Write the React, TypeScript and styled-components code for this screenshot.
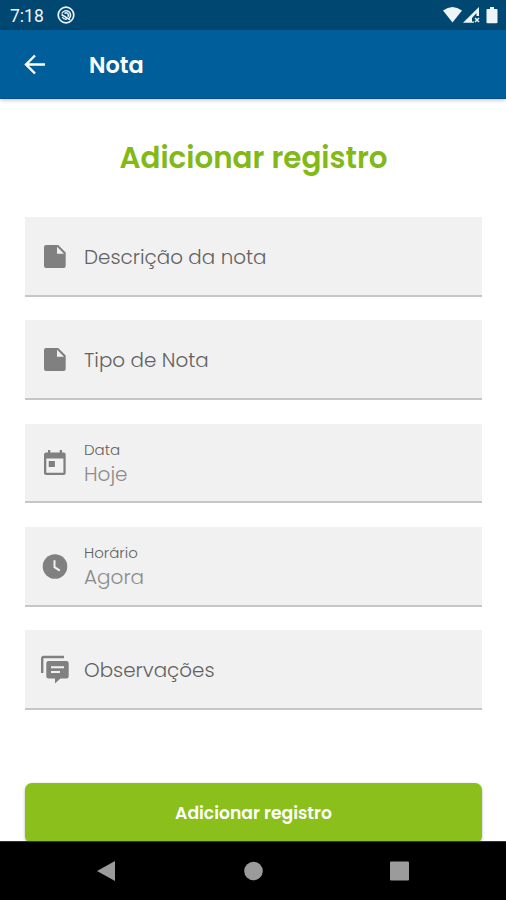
import React from 'react';
import styled, { createGlobalStyle } from 'styled-components';

const GlobalStyle = createGlobalStyle`
  * { box-sizing: border-box; }
  body { margin: 0; background: #fff; }
`;

const Screen = styled.div`
  width: 506px;
  height: 900px;
  display: flex;
  flex-direction: column;
  overflow: hidden;
  background: #fff;
  font-family: Poppins, Inter, sans-serif;
`;

const StatusBar = styled.div`
  flex: none;
  height: 30px;
  padding: 0 7px 0 10px;
  display: flex;
  align-items: center;
  background: #004772;
  color: #eef5fa;
`;

const Clock = styled.span`
  width: 47px;
  font: 400 17.5px/30px Roboto, sans-serif;
  padding-top: 2px;
`;

const StatusIcons = styled.div`
  margin-left: auto;
  display: flex;
`;

const AppBar = styled.header`
  flex: none;
  height: 69px;
  padding-left: 24px;
  display: flex;
  align-items: center;
  background: #005f9a;
  border-bottom: 1px solid #07508d;
  box-shadow: 0 1px 4px rgba(0, 0, 0, 0.25);
  color: #fff;
`;

const BarTitle = styled.h1`
  margin: 0 0 0 43px;
  padding-top: 1px;
  font-size: 22.4px;
  line-height: 30px;
  font-weight: 600;
`;

const Content = styled.main`
  flex: 1;
  min-height: 0;
  overflow: hidden;
  padding: 39px 24px 0 25px;
  display: flex;
  flex-direction: column;
`;

const Heading = styled.h2`
  flex: none;
  margin: 0 0 39px;
  text-align: center;
  font-size: 29.4px;
  line-height: 40px;
  font-weight: 600;
  color: #82b916;
`;

const Fields = styled.div`
  flex: none;
  display: flex;
  flex-direction: column;
  gap: 23.4px;
`;

const Field = styled.div`
  height: 79.9px;
  padding-left: 15px;
  display: flex;
  align-items: center;
  background: #f1f1f1;
  border-bottom: 2px solid #c6c6c6;
`;

const FieldText = styled.div`
  margin-left: 14px;
  padding-top: 2px;
  display: flex;
  flex-direction: column;
`;

const Label = styled.span<{ $small?: boolean }>`
  font-size: ${(p) => (p.$small ? 15 : 19.9)}px;
  line-height: ${(p) => (p.$small ? 20 : 28)}px;
  font-weight: 300;
  color: #626262;
`;

const Value = styled.span`
  font-size: 20px;
  line-height: 28px;
  font-weight: 300;
  color: #8c8c8c;
`;

const SubmitButton = styled.button`
  flex: none;
  height: 60px;
  margin-top: 73px;
  padding: 0;
  border: 0;
  border-radius: 7px;
  background: #8abf1c;
  box-shadow: 0 1px 3px rgba(0, 0, 0, 0.3);
  color: #fff;
  font-family: inherit;
  font-size: 17.2px;
  font-weight: 600;
`;

const NavBar = styled.nav`
  flex: none;
  height: 59px;
  padding: 0 96px;
  display: flex;
  align-items: center;
  justify-content: space-between;
  background: #000;
  border-top: 1px solid #333;
`;

const Glyph = styled.svg`
  display: block;
  flex: none;
  fill: currentColor;
`;

const FieldGlyph = styled(Glyph)`
  color: #808080;
`;

const NavGlyph = styled(Glyph)`
  color: #9b9b9b;
`;

const NoteIcon = () => (
  <FieldGlyph width="30" height="30" viewBox="0 0 30 30">
    <path fillRule="evenodd" d="M6 4h12.200l7.500 7.500v13.500a2 2 0 0 1-2 2H6a2 2 0 0 1-2-2V6a2 2 0 0 1 2-2ZM17 5.800v7h7Z" />
  </FieldGlyph>
);

const CalendarIcon = () => (
  <FieldGlyph width="30" height="30" viewBox="0 0 30 30">
    <path fillRule="evenodd" d="M8 2h2.300v2.500h9.400V2H22v2.500h1.700a2 2 0 0 1 2 2V25a2 2 0 0 1-2 2H6a2 2 0 0 1-2-2V6.500a2 2 0 0 1 2-2h2ZM6.300 10.500v14.200h17.100V10.500Z" />
    <path d="M8.700 13h6.200v6H8.700z" />
  </FieldGlyph>
);

const ClockIcon = () => (
  <FieldGlyph width="30" height="30" viewBox="0 0 30 30">
    <circle cx="15" cy="15.500" r="12.300" />
    <path d="M14.500 9.300v6.800l5.300 3.500" fill="none" stroke="#f1f1f1" strokeWidth="2" />
  </FieldGlyph>
);

const ChatIcon = () => (
  <FieldGlyph width="30" height="30" viewBox="0 0 30 30">
    <path d="M2.200 19V4.500A1.500 1.500 0 0 1 3.700 3H24" fill="none" stroke="currentColor" strokeWidth="2.400" />
    <path d="M8.500 7h18a2.200 2.200 0 0 1 2.200 2.200v13a2.200 2.200 0 0 1-2.200 2.200h-6L15 29.500v-5.100H8.500a2.200 2.200 0 0 1-2.200-2.200v-13A2.200 2.200 0 0 1 8.500 7Z" />
    <path d="M11 13.200h13M11 18h9" fill="none" stroke="#f1f1f1" strokeWidth="2" />
  </FieldGlyph>
);

interface FieldData {
  label: string;
  value?: string;
  icon: React.ReactNode;
}

const fields: FieldData[] = [
  { label: 'Descrição da nota', icon: <NoteIcon /> },
  { label: 'Tipo de Nota', icon: <NoteIcon /> },
  { label: 'Data', value: 'Hoje', icon: <CalendarIcon /> },
  { label: 'Horário', value: 'Agora', icon: <ClockIcon /> },
  { label: 'Observações', icon: <ChatIcon /> },
];

export default function App() {
  return (
    <Screen>
      <GlobalStyle />
      <StatusBar>
        <Clock>7:18</Clock>
        <Glyph width="18" height="18" viewBox="0 0 18 18">
          <circle cx="9" cy="9" r="7.800" fill="none" stroke="currentColor" strokeWidth="1.700" />
          <path d="M4.900 7.500a4.500 4.500 0 1 1 7.300 4.900M4.500 8.500l8.500 5.300M5.200 11a4.300 4.300 0 0 0 4.500 2.200M7.500 7.500a2.300 2.300 0 0 1 3.300 3.200" fill="none" stroke="currentColor" strokeWidth="1.500" />
        </Glyph>
        <StatusIcons>
          <Glyph width="56" height="20" viewBox="0 0 56 20">
            <path d="M0 5.500Q9.500-1.500 19 5.500L9.500 17.500Z" />
            <path fillRule="evenodd" d="M20 17.800 36 2v9h-2.500V8l-4.500 5v3.500h2v1.300Z" />
            <path d="m32 13 4 4m0-4-4 4" stroke="currentColor" strokeWidth="1.500" />
            <path d="M47 2h4v2h2.500a1 1 0 0 1 1 1v12.200a1 1 0 0 1-1 1h-9a1 1 0 0 1-1-1V5a1 1 0 0 1 1-1H47Z" />
          </Glyph>
        </StatusIcons>
      </StatusBar>
      <AppBar>
        <Glyph width="22" height="22" viewBox="0 0 22 22">
          <path d="M21 11.500H2.500M11 2.500l-9 9 9 9" fill="none" stroke="currentColor" strokeWidth="2.400" />
        </Glyph>
        <BarTitle>Nota</BarTitle>
      </AppBar>
      <Content>
        <Heading>Adicionar registro</Heading>
        <Fields>
          {fields.map((f) => (
            <Field key={f.label}>
              {f.icon}
              <FieldText>
                <Label $small={!!f.value}>{f.label}</Label>
                {f.value && <Value>{f.value}</Value>}
              </FieldText>
            </Field>
          ))}
        </Fields>
        <SubmitButton>Adicionar registro</SubmitButton>
      </Content>
      <NavBar>
        <NavGlyph width="20" height="22" viewBox="0 0 20 22"><path d="M1 11 19 1v20Z" /></NavGlyph>
        <NavGlyph width="20" height="20" viewBox="0 0 20 20"><circle cx="10.500" cy="10" r="9.300" /></NavGlyph>
        <NavGlyph width="21" height="20" viewBox="0 0 21 20"><rect x="1" y=".5" width="19" height="19" rx="1" /></NavGlyph>
      </NavBar>
    </Screen>
  );
}
